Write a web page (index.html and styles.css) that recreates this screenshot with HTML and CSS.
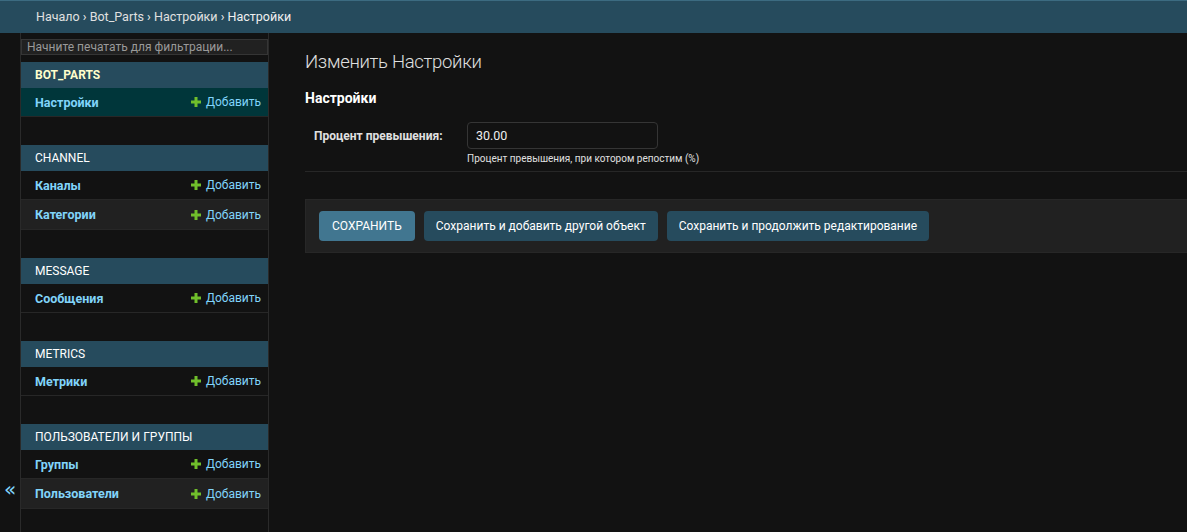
FILE: index.html
```
<!DOCTYPE html>
<html lang="ru">
<head>
<meta charset="utf-8">
<title>Изменить Настройки</title>
<link rel="stylesheet" href="styles.css">
</head>
<body>
<div class="breadcrumbs"><a href="#">Начало</a> › <a href="#">Bot_Parts</a> › <a href="#">Настройки</a> › Настройки</div>
<div class="main">
  <button class="toggle" type="button">«</button>
  <nav class="sidebar">
    <input class="filter" type="search" placeholder="Начните печатать для фильтрации...">
    <div class="module current">
      <div class="caption"><a href="#">Bot_Parts</a></div>
      <div class="row selected"><a class="model" href="#">Настройки</a><a class="add" href="#"><svg viewBox="0 0 10 10" width="10" height="10"><path d="M3.5 0h3v3.5H10v3H6.5V10h-3V6.5H0v-3h3.5z" fill="#70bf2b"/></svg>Добавить</a></div>
    </div>
    <div class="module">
      <div class="caption"><a href="#">Channel</a></div>
      <div class="row"><a class="model" href="#">Каналы</a><a class="add" href="#"><svg viewBox="0 0 10 10" width="10" height="10"><path d="M3.5 0h3v3.5H10v3H6.5V10h-3V6.5H0v-3h3.5z" fill="#70bf2b"/></svg>Добавить</a></div>
      <div class="row alt"><a class="model" href="#">Категории</a><a class="add" href="#"><svg viewBox="0 0 10 10" width="10" height="10"><path d="M3.5 0h3v3.5H10v3H6.5V10h-3V6.5H0v-3h3.5z" fill="#70bf2b"/></svg>Добавить</a></div>
    </div>
    <div class="module">
      <div class="caption"><a href="#">Message</a></div>
      <div class="row"><a class="model" href="#">Сообщения</a><a class="add" href="#"><svg viewBox="0 0 10 10" width="10" height="10"><path d="M3.5 0h3v3.5H10v3H6.5V10h-3V6.5H0v-3h3.5z" fill="#70bf2b"/></svg>Добавить</a></div>
    </div>
    <div class="module">
      <div class="caption"><a href="#">Metrics</a></div>
      <div class="row"><a class="model" href="#">Метрики</a><a class="add" href="#"><svg viewBox="0 0 10 10" width="10" height="10"><path d="M3.5 0h3v3.5H10v3H6.5V10h-3V6.5H0v-3h3.5z" fill="#70bf2b"/></svg>Добавить</a></div>
    </div>
    <div class="module">
      <div class="caption"><a href="#">Пользователи и группы</a></div>
      <div class="row"><a class="model" href="#">Группы</a><a class="add" href="#"><svg viewBox="0 0 10 10" width="10" height="10"><path d="M3.5 0h3v3.5H10v3H6.5V10h-3V6.5H0v-3h3.5z" fill="#70bf2b"/></svg>Добавить</a></div>
      <div class="row alt"><a class="model" href="#">Пользователи</a><a class="add" href="#"><svg viewBox="0 0 10 10" width="10" height="10"><path d="M3.5 0h3v3.5H10v3H6.5V10h-3V6.5H0v-3h3.5z" fill="#70bf2b"/></svg>Добавить</a></div>
    </div>
  </nav>
  <main class="content">
    <h1>Изменить Настройки</h1>
    <fieldset class="fieldset">
      <h2>Настройки</h2>
      <div class="form-row">
        <label class="label" for="pct">Процент превышения:</label>
        <div class="field">
          <input id="pct" class="input" type="text" value="30.00">
          <div class="help">Процент превышения, при котором репостим (%)</div>
        </div>
      </div>
    </fieldset>
    <div class="submit-row">
      <button class="btn default" type="button">СОХРАНИТЬ</button>
      <button class="btn" type="button">Сохранить и добавить другой объект</button>
      <button class="btn" type="button">Сохранить и продолжить редактирование</button>
    </div>
  </main>
</div>
</body>
</html>
```
FILE: styles.css
```
* { box-sizing: border-box; }
html, body { height: 100%; }
body {
  margin: 0;
  background: #121212;
  color: #eeeeee;
  font-family: Roboto, "Noto Sans", sans-serif;
  font-size: 13px;
  overflow: hidden;
}
a { text-decoration: none; }
.breadcrumbs {
  height: 33px;
  background: #264b5d;
  border-top: 1px solid #3c6b81;
  padding: 0 0 0 36px;
  line-height: 31px;
  font-size: 12.5px;
  color: #f0f0f0;
}
.breadcrumbs a { color: #e0e0e0; }
.main {
  display: flex;
  height: calc(100% - 33px);
}
.toggle {
  flex: 0 0 21px;
  background: #121212;
  border: 0;
  border-right: 1px solid #2a2a2a;
  color: #81d4fa;
  font-size: 20px;
  padding: 0 0 33px 0;
  display: flex;
  align-items: flex-end;
  justify-content: center;
  font-family: "DejaVu Sans", sans-serif;
  line-height: 1;
}
.sidebar {
  flex: 0 0 248px;
  border-right: 1px solid #2a2a2a;
  padding-top: 6px;
  display: flex;
  flex-direction: column;
}
.filter {
  display: block;
  width: 100%;
  height: 18px;
  margin: 0 0 7px 0;
  background: #212121;
  border: 1px solid #353535;
  color: #eee;
  font-family: inherit;
  font-size: 12px;
  padding: 0 5px;
  outline: none;
}
.filter::placeholder { color: #9a9a9a; }
.module { margin-bottom: 28px; }
.caption {
  height: 26px;
  background: #264b5d;
  padding-left: 14px;
  line-height: 26px;
  font-size: 12px;
  text-transform: uppercase;
}
.caption a { color: #ffffff; }
.current .caption a { color: #ffffcc; font-weight: 700; }
.row {
  height: 29px;
  display: flex;
  align-items: center;
  justify-content: space-between;
  padding: 0 7px 0 14px;
  border-bottom: 1px solid #272727;
}
.row.alt { background: #212121; height: 30px; }
.row.selected { background: #00363a; }
.model { color: #81d4fa; font-weight: 700; font-size: 12.5px; }
.add { color: #81d4fa; font-size: 12px; display: flex; align-items: center; gap: 5px; }
.add svg { display: block; }
.content {
  flex: 1;
  padding: 0 0 0 36px;
  min-width: 0;
}
h1 {
  margin: 17px 0 0 0;
  font-size: 18.5px;
  letter-spacing: -0.3px;
  font-weight: 300;
  color: #e0e0e0;
  line-height: 24px;
}
.fieldset {
  margin: 0;
  padding: 0;
  border: 0;
  border-bottom: 1px solid #272727;
}
h2 {
  margin: 15px 0 0 0;
  font-size: 14px;
  font-weight: 700;
  color: #ffffff;
  line-height: 18px;
}
.form-row {
  display: flex;
  padding: 15px 10px 7px 9px;
}
.label {
  width: 153px;
  font-weight: 700;
  font-size: 12px;
  padding-top: 7px;
  color: #e0e0e0;
}
.input {
  display: block;
  width: 191px;
  height: 27px;
  background: #121212;
  border: 1px solid #353535;
  border-radius: 4px;
  color: #eee;
  font-family: inherit;
  font-size: 12.5px;
  padding: 0 8px;
  outline: none;
}
.help {
  font-size: 10px;
  color: #e0e0e0;
  margin-top: 4px;
}
.submit-row {
  margin-top: 27px;
  background: #212121;
  border: 1px solid #272727;
  border-right: 0;
  padding: 11px 13px;
  display: flex;
  gap: 9px;
}
.btn {
  height: 30px;
  border: 0;
  border-radius: 4px;
  background: #264b5d;
  color: #ffffff;
  font-family: inherit;
  font-size: 12px;
  padding: 0 12px;
}
.btn.default { background: #417690; padding: 0 13px; }
```
